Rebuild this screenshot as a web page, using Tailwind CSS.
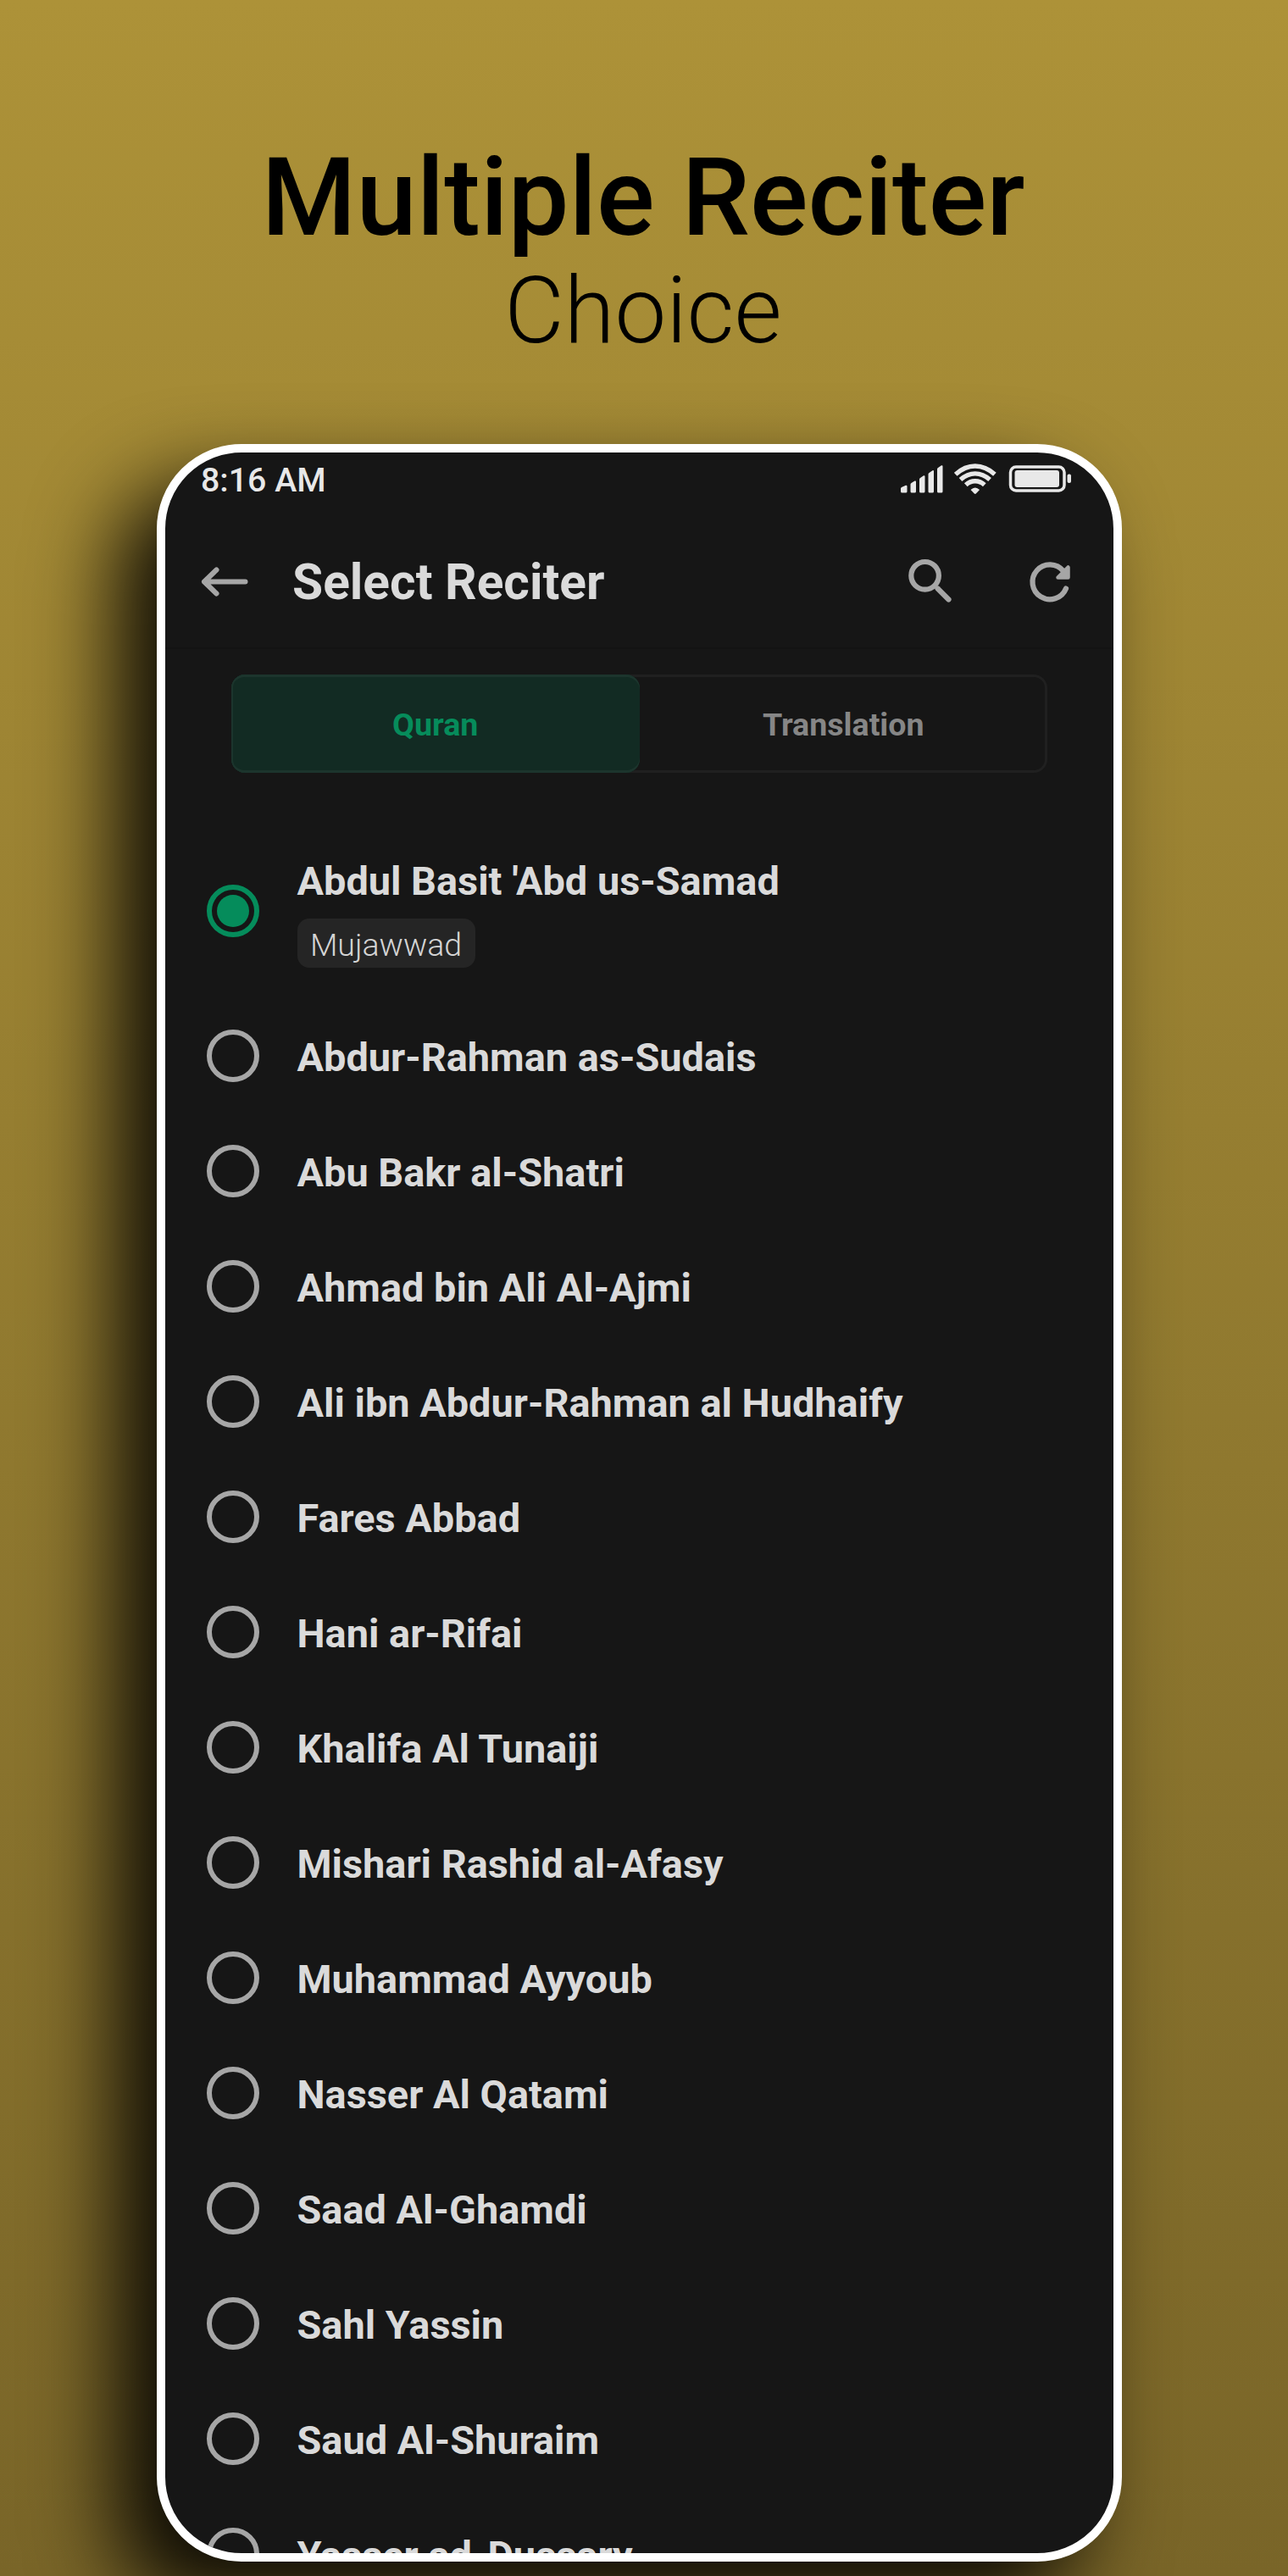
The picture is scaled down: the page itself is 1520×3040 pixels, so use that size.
<!DOCTYPE html>
<html lang="en">
<head>
<meta charset="utf-8">
<title>Select Reciter</title>
<script src="https://cdn.jsdelivr.net/npm/@tailwindcss/browser@4"></script>
</head>
<body class="font-['Roboto',sans-serif]">
<div class="flex h-[3040px] w-[1520px] flex-col overflow-hidden bg-linear-to-b from-[#ad9238] to-[#796528] pt-[169px] text-black">
  <h1 class="pr-[2px] text-center text-[128px] leading-[128px] font-medium whitespace-nowrap">Multiple Reciter</h1>
  <p class="mt-[15px] pr-[2px] text-center text-[108.500px] leading-[110px] font-light">Choice</p>

  <main class="mt-[102px] ml-[185px] flex h-[2499px] w-[1139px] shrink-0 flex-col overflow-hidden rounded-[100px] border-[10px] border-white bg-[#161616] text-[#dadada] shadow-[-48px_48px_100px_0px_#000000e6]">
    <div class="flex shrink-0 items-center pt-2 pr-[49px] pl-[42px]">
      <span class="pt-[2px] text-[39.300px] leading-[46px] font-medium text-[#e8e8e8]">8:16 AM</span>
      <div class="ml-auto flex items-center text-[#e8e8e8]">
        <svg class="h-12 w-[52px]" viewBox="0 0 52 48" fill="currentColor">
          <path d="M1 38V34.5Q1 33.500 2 33L7 30.700Q8.500 30.500 8.500 32V38Q8.500 39.500 7 39.500H2.500Q1 39.500 1 38ZM12.500 38V29.500Q12.500 28.500 13.500 28L17.500 25.500Q19 25 19 26.500V38Q19 39.500 17.500 39.500H14Q12.500 39.500 12.500 38ZM23 38V23.500Q23 22.500 24 22L28 19.300Q29.500 18.800 29.500 20.300V38Q29.500 39.500 28 39.500H24.500Q23 39.500 23 38ZM33.500 38V17.500Q33.500 16.500 34.500 16L38.500 13.200Q40 12.700 40 14.200V38Q40 39.500 38.500 39.500H35Q33.500 39.500 33.500 38ZM44 38V11.500Q44 10.500 45 10L49 7.300Q50.500 6.800 50.500 8.300V38Q50.500 39.500 49 39.500H45.500Q44 39.500 44 38Z"/>
        </svg>
        <svg class="ml-[12px] h-12 w-[50px]" viewBox="0 0 50 48" fill="none" stroke="currentColor" stroke-width="5.400">
          <path d="M1.700 17.800Q12.500 8 24.800 8T47.900 17.800"/>
          <path d="M7.500 24.100Q15.500 16.900 24.800 16.900T42.100 24.100"/>
          <path d="M13.800 30.300Q18.500 25.800 24.800 25.800T35.800 30.300"/>
          <path d="M19.500 36Q24.800 31 30.100 36L25.800 40.500Q24.800 41.400 23.800 40.500Z" fill="currentColor" stroke="none"/>
        </svg>
        <svg class="ml-[14px] h-12 w-[75px]" viewBox="0 0 75 48" fill="none">
          <rect x="2.500" y="9" width="63.500" height="28" rx="6.500" stroke="currentColor" stroke-width="3.500"/>
          <rect x="7.500" y="13" width="52.500" height="20" rx="3" fill="currentColor"/>
          <rect x="69.500" y="17.500" width="4.500" height="10.500" rx="2" fill="currentColor"/>
        </svg>
      </div>
    </div>

    <header class="flex h-[176px] shrink-0 items-center border-b-2 border-[#131313] pt-[20px] pr-[48px] pl-[42px]">
      <svg class="h-9 w-14" viewBox="0 0 56 36" fill="none" stroke="#a6a6a6" stroke-width="6" stroke-linecap="round" stroke-linejoin="round"><path d="M52.500 17.500H4M18.500 3.500L4 17.500L18.500 31.500"/></svg>
      <h2 class="ml-[52px] text-[58.700px] leading-[64px] font-bold whitespace-nowrap">Select Reciter</h2>
      <div class="ml-auto flex items-center">
        <svg class="h-[60px] w-[60px]" viewBox="1068 657 60 60" fill="none" stroke="#a6a6a6" stroke-width="6.200" stroke-linecap="round"><circle cx="1091.600" cy="679.300" r="16.300"/><path d="M1106.500 694.500L1119.500 707.500"/></svg>
        <svg class="ml-[84px] h-[60px] w-[54px]" viewBox="1212 657 54 60" fill="none" stroke="#a6a6a6" stroke-width="6.200" stroke-linecap="round"><path d="M1258 694.500A20.500 20.500 0 1 1 1255 674"/><path d="M1260.500 669.500V681.500H1248.500Z" fill="#a6a6a6" stroke-width="4.500" stroke-linejoin="round"/></svg>
      </div>
    </header>

    <div class="mt-[30px] ml-[78px] grid h-[116px] w-[963px] shrink-0 grid-cols-2 rounded-2xl text-[37.600px] leading-none font-bold shadow-[inset_0_0_0_3px_#202020]">
      <div class="flex items-center justify-center rounded-2xl bg-[#122b23] pt-1 text-[#068c5b] shadow-[inset_0_3px_0_0_#1c352d,inset_0_-3px_0_0_#1c352d,inset_2px_0_0_0_#1c352d]">Quran</div>
      <div class="flex items-center justify-center pt-1 text-[#868686]">Translation</div>
    </div>

    <ul id="reciters" class="mt-[76px] flex flex-col text-[46.900px] leading-[56px] font-bold whitespace-nowrap">
      <li class="flex h-[190px] shrink-0 pl-[49px]">
        <span class="mt-[56px] flex h-[62px] w-[62px] items-center justify-center rounded-full border-[6px] border-[#058c5b]"><span class="h-[38px] w-[38px] rounded-full bg-[#058c5b]"></span></span>
        <div class="ml-[44.500px] pt-[24px]">
          <div>Abdul Basit 'Abd us-Samad</div>
          <div class="mt-[16px] flex h-[58px] w-[210px] items-center justify-center rounded-[14px] bg-[#252525] pt-[5px] text-[37.500px] leading-none font-light text-[#d4d4d4]">Mujawwad</div>
        </div>
      </li>
    </ul>
  </main>
</div>
<script>
  const names = ["Abdur-Rahman as-Sudais", "Abu Bakr al-Shatri", "Ahmad bin Ali Al-Ajmi", "Ali ibn Abdur-Rahman al Hudhaify", "Fares Abbad", "Hani ar-Rifai", "Khalifa Al Tunaiji", "Mishari Rashid al-Afasy", "Muhammad Ayyoub", "Nasser Al Qatami", "Saad Al-Ghamdi", "Sahl Yassin", "Saud Al-Shuraim", "Yasser ad-Dussary"];
  document.getElementById("reciters").insertAdjacentHTML("beforeend", names.map(n =>
    `<li class="flex h-[136px] shrink-0 items-center pl-[49px]"><span class="h-[62px] w-[62px] rounded-full border-[6px] border-[#a6a6a6]"></span><span class="ml-[44.500px] pt-[3px]">${n}</span></li>`).join(""));
</script>
</body>
</html>
